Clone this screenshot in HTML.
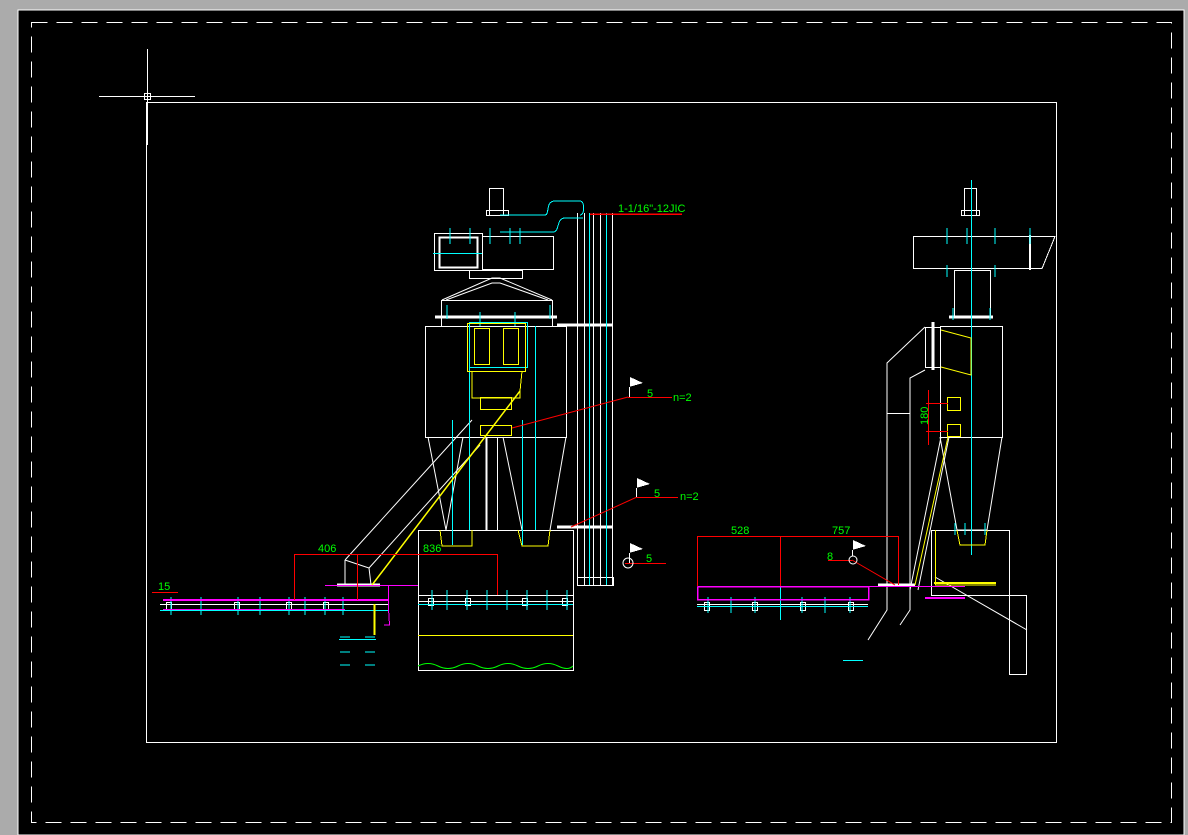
<!DOCTYPE html>
<html><head><style>
html,body{margin:0;padding:0;background:#ababab;width:1188px;height:835px;overflow:hidden}
svg{position:absolute;left:0;top:0}
text{font-family:"Liberation Sans",sans-serif;font-size:11px;fill:#00ff00}
</style></head><body>
<svg width="1188" height="835" viewBox="0 0 1188 835" shape-rendering="crispEdges">
<rect x="18" y="10" width="1166" height="825" fill="#000" stroke="#fff" stroke-width="1"/>
<rect x="31.5" y="22.5" width="1140" height="800" fill="none" stroke="#fff" stroke-dasharray="16,9"/>
<rect x="146.5" y="102.5" width="910" height="640" fill="none" stroke="#fff"/>
<g stroke="#fff" fill="none">
<line x1="99" y1="96.5" x2="195" y2="96.5"/><line x1="147.5" y1="49" x2="147.5" y2="145"/>
<rect x="144.5" y="93.5" width="6" height="6"/>
</g>
<!-- LEFT MACHINE -->
<g stroke="#fff" fill="none" stroke-width="1">
<rect x="489.5" y="188.5" width="14" height="27"/>
<rect x="486.5" y="210.5" width="22" height="5"/>
<rect x="482.5" y="236.5" width="71" height="33"/>
<rect x="434.5" y="233.5" width="48" height="37"/>
<rect x="439.5" y="237.5" width="38" height="30" stroke-width="2"/>
<polyline points="442,300 492,278 500,278 552,300" shape-rendering="auto"/>
<polyline points="446,300 492,283 500,283 548,300" shape-rendering="auto"/>
<rect x="469.5" y="270.5" width="53" height="8"/>
<rect x="441.5" y="300.5" width="111" height="26"/>
<line x1="435" y1="317" x2="557" y2="317" stroke-width="3"/>
<rect x="425.5" y="326.5" width="141" height="111"/>
<g shape-rendering="auto">
<line x1="428" y1="437" x2="446" y2="530"/><line x1="463" y1="437" x2="446" y2="530"/>
<line x1="566" y1="437" x2="550" y2="530"/><line x1="503" y1="437" x2="522" y2="530"/>
<line x1="345" y1="560" x2="472" y2="420"/><line x1="369" y1="568" x2="480" y2="445"/>
<polyline points="345,560 345,585 371,585 369,568 345,560"/>
</g>
<line x1="486.5" y1="437" x2="486.5" y2="530" stroke-width="2"/><line x1="497.5" y1="437" x2="497.5" y2="530"/>
<rect x="418.5" y="530.5" width="155" height="140"/>
<line x1="337" y1="585" x2="380" y2="585" stroke-width="3"/>
<line x1="160" y1="604.5" x2="388" y2="604.5"/>
<line x1="418" y1="595.5" x2="573" y2="595.5"/><line x1="418" y1="601.5" x2="573" y2="601.5"/>
<line x1="577.5" y1="213" x2="577.5" y2="585"/><line x1="584.5" y1="213" x2="584.5" y2="585"/>
<line x1="593.5" y1="213" x2="593.5" y2="585"/><line x1="600.5" y1="213" x2="600.5" y2="585"/>
<line x1="612.5" y1="213" x2="612.5" y2="585"/>
<line x1="557" y1="325" x2="613" y2="325" stroke-width="3"/>
<line x1="557" y1="527" x2="613" y2="527" stroke-width="3"/>
<rect x="577.5" y="577.5" width="36" height="8"/>
<rect x="166.5" y="602.5" width="5" height="8"/><rect x="234.5" y="602.5" width="5" height="8"/><rect x="286.5" y="602.5" width="5" height="8"/><rect x="323.5" y="602.5" width="5" height="8"/>
<rect x="428.5" y="598.5" width="5" height="7"/><rect x="465.5" y="598.5" width="5" height="7"/><rect x="522.5" y="598.5" width="5" height="7"/><rect x="562.5" y="598.5" width="5" height="7"/>
</g>
<g stroke="#00ffff" fill="none">
<path d="M500,215 H545 C550,215 545,201 555,201 H580 C585,201 585,215 580,215"/>
<path d="M500,232 H553 C560,232 556,218 565,218 H583"/>
<line x1="589.5" y1="213" x2="589.5" y2="585"/><line x1="606.5" y1="213" x2="606.5" y2="585"/>
<line x1="469.5" y1="326" x2="469.5" y2="530"/><line x1="535.5" y1="326" x2="535.5" y2="530"/>
<line x1="433" y1="253.5" x2="482" y2="253.5"/>
<rect x="469.5" y="322.5" width="58" height="45"/>
<line x1="452.5" y1="420" x2="452.5" y2="545"/><line x1="522.5" y1="420" x2="522.5" y2="545"/>
<line x1="160" y1="610.5" x2="388" y2="610.5"/>
<line x1="418" y1="604.5" x2="573" y2="604.5"/>
<line x1="339" y1="639.5" x2="376" y2="639.5"/>
<path d="M171,597v18M201,597v18M238,597v18M260,597v18M289,597v18M305,597v18M325,597v18M343,597v18M432,590v20M447,590v20M467,590v20M487,590v20M507,590v20M527,590v20M547,590v20M567,590v20M450,228v16M470,228v16M490,228v16M510,228v16M520,228v16M447,305v14M550,305v14M480,312v14M515,312v14"/>
<path d="M340,637h10M365,637h10M340,652h10M365,652h10M340,665h10M365,665h10"/>
</g>
<g stroke="#ffff00" fill="none">
<rect x="467.5" y="323.5" width="58" height="48"/>
<rect x="474.5" y="328.5" width="15" height="36"/><rect x="503.5" y="328.5" width="15" height="36"/>
<polyline points="472,371 472,398 520,398 520,391 522,371"/>
<rect x="480.5" y="397.5" width="31" height="12"/><rect x="480.5" y="425.5" width="31" height="10"/>
<line x1="520" y1="391" x2="372" y2="585" stroke-width="1.5" shape-rendering="auto"/>
<polyline points="440,530 442,546 472,546 472,530"/><polyline points="518,530 522,546 548,546 550,530"/>
<line x1="418" y1="635.5" x2="573" y2="635.5"/>
<line x1="374.5" y1="604" x2="374.5" y2="635" stroke-width="2"/>
</g>
<g stroke="#ff00ff" fill="none">
<line x1="163" y1="600" x2="388" y2="600" stroke-width="2"/>
<line x1="163" y1="609.5" x2="345" y2="609.5"/>
<polyline points="388.5,585 388.5,609 389.5,625 384,625"/>
<line x1="325" y1="585.5" x2="418" y2="585.5"/>
</g>
<path d="M418,666 q10,-5 20,0 t20,0 t20,0 t20,0 t20,0 t20,0 t20,0 t15,0" stroke="#00ff00" fill="none" shape-rendering="auto"/>
<g stroke="#ff0000" fill="none">
<line x1="294" y1="554.5" x2="497" y2="554.5"/><line x1="294.5" y1="554" x2="294.5" y2="600"/>
<line x1="357.5" y1="554" x2="357.5" y2="600"/><line x1="497.5" y1="554" x2="497.5" y2="595"/>
<line x1="152" y1="592.5" x2="178" y2="592.5"/>
<line x1="590" y1="214" x2="682" y2="214" stroke-width="1.5"/>
<line x1="628" y1="397.5" x2="672" y2="397.5"/>
<line x1="637" y1="497.5" x2="678" y2="497.5"/>
<line x1="625" y1="563.5" x2="666" y2="563.5"/>
<g shape-rendering="auto"><line x1="512" y1="428" x2="628" y2="397"/><line x1="571" y1="527" x2="637" y2="497"/></g>
</g>
<circle cx="628" cy="563" r="5" stroke="#fff" fill="none" shape-rendering="auto"/>
<g fill="#fff">
<path d="M629,377 L629,397 L630,397 L630,377 L643,383 L629,387Z"/>
<path d="M636,478 L636,497 L637,497 L637,478 L650,484 L636,488Z"/>
<path d="M629,543 L629,563 L630,563 L630,543 L643,549 L629,553Z"/>
</g>
<text x="618" y="212">1-1/16"-12JIC</text>
<text x="318" y="552">406</text><text x="423" y="552">836</text>
<text x="158" y="590">15</text>
<text x="647" y="397">5</text><text x="673" y="401">n=2</text>
<text x="654" y="497">5</text><text x="680" y="500">n=2</text>
<text x="646" y="562">5</text>
<!-- RIGHT MACHINE -->
<g stroke="#fff" fill="none">
<rect x="964.5" y="188.5" width="12" height="27"/>
<rect x="961.5" y="210.5" width="18" height="5"/>
<polyline points="913,236.5 1055,236.5 1042,268.5 913.5,268.5 913.5,236"/>
<line x1="1030" y1="235" x2="1030" y2="270" stroke-width="2"/>
<rect x="954.5" y="270.5" width="36" height="47"/>
<line x1="949" y1="317" x2="993" y2="317" stroke-width="3"/>
<rect x="940.5" y="326.5" width="62" height="111"/>
<g shape-rendering="auto">
<polyline points="940,437 957,530 987,530 1002,437"/>
<polyline points="925,327 887,363 887,610 868,640"/>
<polyline points="925,370 910,378 910,610 900,625"/>
<line x1="935" y1="577" x2="1027" y2="630"/>
<line x1="941" y1="437" x2="910" y2="590"/><line x1="949" y1="437" x2="918" y2="590"/>
</g>
<line x1="887" y1="413.5" x2="910" y2="413.5"/>
<rect x="925.5" y="327.5" width="15" height="40"/>
<line x1="933" y1="322" x2="933" y2="370" stroke-width="3"/>
<rect x="931.5" y="530.5" width="78" height="65"/>
<rect x="1009.5" y="595.5" width="17" height="79"/>
<line x1="878" y1="585" x2="915" y2="585" stroke-width="3"/>
<line x1="697" y1="604.5" x2="868" y2="604.5"/>
<rect x="704.5" y="602.5" width="5" height="8"/><rect x="752.5" y="602.5" width="5" height="8"/><rect x="800.5" y="602.5" width="5" height="8"/><rect x="848.5" y="602.5" width="5" height="8"/>
</g>
<g stroke="#00ffff" fill="none">
<line x1="971.5" y1="180" x2="971.5" y2="555"/>
<line x1="697" y1="606.5" x2="868" y2="606.5"/>
<line x1="780.5" y1="540" x2="780.5" y2="620"/>
<line x1="843" y1="660.5" x2="863" y2="660.5"/>
<path d="M708,597v16M731,597v16M755,597v16M802,597v16M825,597v16M850,597v16M947,228v16M967,228v16M995,228v16M1030,228v16M947,265v12M995,265v12M953,308v12M990,308v12M955,523v12M965,523v12M985,523v12"/>
</g>
<g stroke="#ffff00" fill="none">
<polyline points="941,330 971,338 971,375 941,367" shape-rendering="auto"/>
<rect x="947.5" y="397.5" width="13" height="13"/><rect x="947.5" y="424.5" width="13" height="12"/>
<polyline points="935.5,530 935.5,585 996,585"/>
<line x1="934" y1="583" x2="996" y2="583" stroke-width="2"/>
<polyline points="957,530 960,545 985,545 987,530"/>
<line x1="915" y1="585" x2="948" y2="437" shape-rendering="auto"/>
</g>
<g stroke="#ff00ff" fill="none">
<polyline points="697.5,586.5 868.5,586.5 868.5,599.5 697.5,599.5 697.5,586.5" stroke-width="1.5"/>
<line x1="925" y1="598" x2="965" y2="598" stroke-width="2"/>
<line x1="845" y1="586.5" x2="965" y2="586.5"/>
</g>
<g stroke="#ff0000" fill="none">
<line x1="697" y1="536.5" x2="898" y2="536.5"/>
<line x1="697.5" y1="536" x2="697.5" y2="586"/><line x1="780.5" y1="536" x2="780.5" y2="586"/>
<line x1="898.5" y1="536" x2="898.5" y2="585"/>
<line x1="928.5" y1="390" x2="928.5" y2="445"/>
<line x1="926" y1="403.5" x2="948" y2="403.5"/><line x1="926" y1="431.5" x2="948" y2="431.5"/>
<line x1="828" y1="560.5" x2="852" y2="560.5"/><line x1="852" y1="560" x2="895" y2="585" shape-rendering="auto"/>
</g>
<circle cx="853" cy="560" r="4" stroke="#fff" fill="none" shape-rendering="auto"/>
<path d="M852,540 L852,556 L853,556 L853,540 L866,546 L852,550Z" fill="#fff"/>
<text x="731" y="534">528</text><text x="832" y="534">757</text>
<text x="827" y="560">8</text>
<text x="928" y="425" transform="rotate(-90 928 425)">180</text>
</svg>
</body></html>
